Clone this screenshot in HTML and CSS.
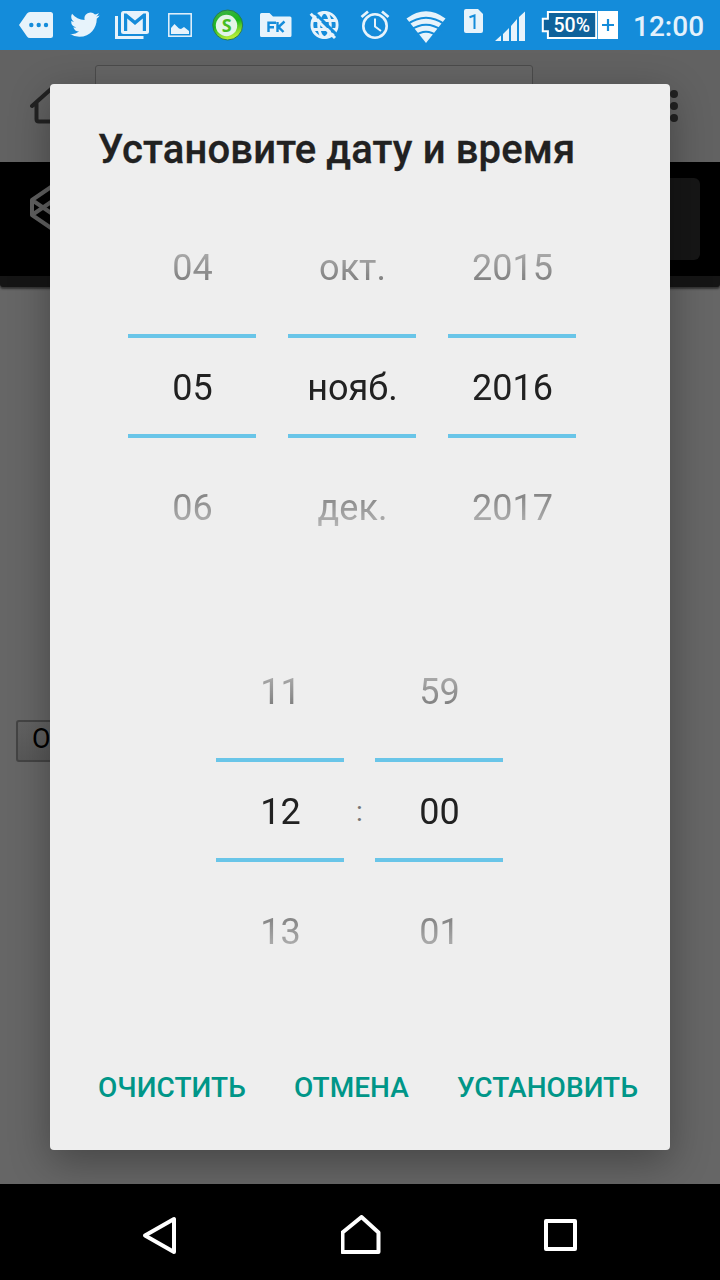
FILE: index.html
```html
<!DOCTYPE html>
<html lang="ru">
<head>
<meta charset="utf-8">
<title>Установите дату и время</title>
<link rel="stylesheet" href="styles.css">
</head>
<body>
<header class="status-bar">
  <svg width="60" height="50" viewBox="0 0 60 50"><path class="ink" d="M19 25L27 13.500Q28 12 30 12H50.500Q53 12 53 14.500V35.500Q53 38 50.500 38H30Q28 38 27 36.500Z"/><g class="hole"><circle cx="31.300" cy="25" r="2.200"/><circle cx="38.700" cy="25" r="2.200"/><circle cx="46" cy="25" r="2.200"/></g></svg>
  <svg width="47" height="50" viewBox="60 0 47 50"><path class="ink" transform="translate(70 9.800) scale(1.240)" d="M23.950 4.570a10 10 0 0 1-2.820.770 4.960 4.960 0 0 0 2.160-2.720c-.950.550-2 .950-3.130 1.180a4.920 4.920 0 0 0-8.380 4.480C7.690 8.090 4.070 6.130 1.640 3.160a4.920 4.920 0 0 0 1.520 6.570 4.900 4.900 0 0 1-2.230-.610v.060a4.920 4.920 0 0 0 3.950 4.830 5 5 0 0 1-2.210.080 4.940 4.940 0 0 0 4.600 3.420A9.870 9.870 0 0 1 0 19.540a13.990 13.990 0 0 0 7.550 2.210c9.050 0 14-7.500 14-13.980 0-.210 0-.420-.020-.630a9.940 9.940 0 0 0 2.420-2.570z"/></svg>
  <svg width="51" height="50" viewBox="107 0 51 50"><path class="line" d="M116.500 16V37.500H143.500" stroke-width="3"/><rect class="ink" x="121" y="11" width="28" height="23" rx="2.500"/><path class="hole" d="M124 13.500H126.500L135 20.500 143.500 13.500H146V31H142.800V18.500L135 25 127.200 18.500V31H124Z"/></svg>
  <svg width="44" height="50" viewBox="158 0 44 50"><rect class="line" x="168.800" y="13.800" width="22.400" height="22.400" stroke-width="1.500"/><path class="ink" d="M171 34V28L174.500 24 179 28.500 181 29 184 27 189 31V34Z"/></svg>
  <svg width="49" height="50" viewBox="202 0 49 50">
    <defs><linearGradient id="coin" x2=".3" y2="1"><stop offset="0" stop-color="#45b44b"/><stop offset=".55" stop-color="#19b51e"/><stop offset="1" stop-color="#b4ed36"/></linearGradient></defs>
    <circle cx="227.700" cy="25" r="15" fill="url(#coin)" stroke="#267a55"/><circle cx="226.500" cy="25.500" r="10.700" fill="#e3f4e9"/><text class="coin-sign" x="226.700" y="32" text-anchor="middle">S</text>
  </svg>
  <svg width="50" height="50" viewBox="251 0 50 50"><path class="ink" d="M260 14.500Q260 13 261.500 13H269.500L273 16.500H290Q291.500 16.500 291.500 18V35.500Q291.500 37 290 37H261.500Q260 37 260 35.500Z"/><path class="cut" d="M268.500 32V22.700H276M268.500 27.200H274M277.500 22V32M284.500 21.500L278.500 27 283.500 32" stroke-width="2.400"/></svg>
  <svg width="49" height="50" viewBox="301 0 49 50"><g class="line" stroke-width="2.900"><circle cx="324.500" cy="25" r="12.600"/><ellipse cx="324.500" cy="25" rx="5.800" ry="12.600"/><path d="M312.500 20.500H336.500M312.500 29.500H336.500"/></g><path class="cut" d="M313.500 11.500L338 36" stroke-width="3"/><path class="line" d="M310.700 13.700L335 38" stroke-width="3"/></svg>
  <svg width="47" height="50" viewBox="350 0 47 50"><circle class="line" cx="375" cy="26" r="11.700" stroke-width="2.600"/><path class="line" d="M375 18.500V26.500L381 31" stroke-width="2"/><path class="line" d="M361.500 17L368 11.500M388.500 17L382 11.500" stroke-width="2.800"/></svg>
  <svg width="58" height="50" viewBox="397 0 58 50"><path class="ink" d="M406.500 18.500Q426 4 445.500 18.500L426 43Z"/><path class="cut" d="M407 24.500Q426 11 445 24.500M410 30.500Q426 19 442 30.500M414 36.500Q426 27 438 36.500" stroke-width="1.900"/></svg>
  <svg width="35" height="50" viewBox="455 0 35 50"><path class="ink" d="M466 9H478L483 14V31Q483 33 481 33H466Q464 33 464 31V11Q464 9 466 9Z"/><path class="cut" d="M469.500 17.200L474.500 15.500V29" stroke-width="2"/></svg>
  <svg width="43" height="50" viewBox="490 0 43 50"><path class="ink" d="M495 41L501 35.500V41ZM503 34L509 28V41H503ZM511 26L517 19V41H511ZM519 17L525 11.500V41H519Z"/></svg>
  <svg width="93" height="50" viewBox="533 0 93 50"><path class="battery" d="M547.900 12H596.200V38H547.900V31.200H542.800V18.800H547.900Z"/><rect x="598" y="11" width="20" height="28" fill="#fff"/><path class="cut" d="M602 25H614M608 19V31" stroke-width="2.200"/><text class="percent" x="553.500" y="32" textLength="36.500" lengthAdjust="spacingAndGlyphs">50%</text></svg>
  <time class="clock">12:00</time>
</header>
<main class="page">
  <div class="toolbar">
    <svg class="home" width="50" height="46" viewBox="0 0 50 46"><path d="M2 23L20 7 38 23M6.500 20V36Q6.500 38.500 9 38.500H31Q33.500 38.500 33.500 36V20"/></svg>
    <div class="address"></div>
    <svg class="menu" width="8" height="32" viewBox="0 0 8 32"><circle cx="4" cy="4" r="4"/><circle cx="4" cy="16" r="4"/><circle cx="4" cy="28" r="4"/></svg>
  </div>
  <div class="site-header">
    <svg width="48" height="50" viewBox="0 0 48 50"><path d="M2 18L24 3 46 18V33L24 48 2 33ZM2 18L24 33 46 18M2 33L24 18 46 33M24 3V18M24 33V48"/></svg>
    <div class="site-button"></div>
  </div>
  <div class="site-strip"></div>
  <button class="page-button">Отправить</button>

  <section class="dialog">
    <h1>Установите дату и время</h1>
    <div class="pickers date">
      <div class="picker"><div class="values"><span>04</span><span>05</span><span>06</span></div></div>
      <div class="picker"><div class="values"><span>окт.</span><span>нояб.</span><span>дек.</span></div></div>
      <div class="picker"><div class="values"><span>2015</span><span>2016</span><span>2017</span></div></div>
    </div>
    <div class="pickers time">
      <div class="picker"><div class="values"><span>11</span><span>12</span><span>13</span></div></div>
      <span class="colon">:</span>
      <div class="picker"><div class="values"><span>59</span><span>00</span><span>01</span></div></div>
    </div>
    <div class="actions"><a>ОЧИСТИТЬ</a><a>ОТМЕНА</a><a>УСТАНОВИТЬ</a></div>
  </section>
</main>
<nav class="nav-bar">
  <svg width="36" height="40" viewBox="0 0 36 40"><path d="M3 20.500L32 4V37Z"/></svg>
  <svg width="40" height="40" viewBox="0 0 40 40"><path d="M1 37V17.500L20 2 37 17.500V37Z" transform="translate(.500 0)"/></svg>
  <svg width="34" height="40" viewBox="0 0 34 40"><path d="M2 6H31V34H2Z"/></svg>
</nav>
</body>
</html>
```

FILE: styles.css
```css
* { box-sizing: border-box; }

body {
  margin: 0;
  width: 720px;
  height: 1280px;
  display: flex;
  flex-direction: column;
  overflow: hidden;
  font-family: Roboto, "Noto Sans", sans-serif;
}

svg { display: block; flex: none; }

.status-bar { display: flex; height: 50px; background: #148cda; }
.ink { fill: #e7f3fb; }
.line { fill: none; stroke: #e7f3fb; }
.hole { fill: #148cda; }
.cut { fill: none; stroke: #148cda; }
.coin-sign { font: 700 18px "Open Sans", sans-serif; fill: #47bd22; }
.battery { fill: #0f629b; stroke: #fff; stroke-width: 2; }
.percent { font: 500 20px Roboto, sans-serif; fill: #fff; }
.clock {
  padding-left: 7px;
  font-size: 28px;
  line-height: 53px;
  font-weight: 500;
  color: #e3f1fb;
}

.page {
  position: relative;
  height: 1134px;
  overflow: hidden;
  background: #666;
}
.toolbar {
  display: flex;
  height: 112px;
  background: #626262;
}
.home { margin: 33px 0 0 30px; fill: none; stroke: #222; stroke-width: 4; stroke-linecap: round; }
.address {
  width: 438px;
  height: 76px;
  margin: 15px 0 0 15px;
  border: 1px solid #4b4b4b;
  border-radius: 3px;
  background: #656565;
}
.menu { margin: 40px 0 0 137px; fill: #222; }
.site-header {
  display: flex;
  justify-content: space-between;
  height: 114px;
  padding: 16px 20px 0 30px;
  background: #000;
}
.site-header svg { margin-top: 4px; fill: none; stroke: #606060; stroke-width: 4; stroke-linejoin: round; }
.site-button { width: 92px; height: 82px; border-radius: 6px; background: #161616; }
.site-strip {
  height: 11px;
  background: #151515;
  border-radius: 0 0 3px 3px;
  box-shadow: 0 2px 2px #333;
}
.page-button {
  display: block;
  width: 160px;
  height: 42px;
  margin: 433px 0 0 16px;
  padding: 0 14px 4px;
  border: 2px solid #444;
  border-radius: 3px;
  background: linear-gradient(#626262, #585858);
  font: 27px Roboto, sans-serif;
  text-align: left;
  color: #000;
}

.dialog {
  position: absolute;
  left: 50px;
  top: 34px;
  width: 620px;
  height: 1066px;
  padding: 36px 0 0;
  border-radius: 4px;
  background: #eee;
  box-shadow: 0 12px 40px rgba(0, 0, 0, .32);
  color: #212121;
}
h1 {
  margin: 0 0 0 48px;
  font-size: 40px;
  line-height: 60px;
  font-weight: 500;
  letter-spacing: .14px;
  white-space: nowrap;
  -webkit-text-stroke: .3px #212121;
}
.pickers { display: flex; height: 360px; }
.date { margin: 26px 0 0 78px; gap: 32px; }
.time { margin: 64px 0 0 166px; }
.picker {
  width: 128px;
  background:
    linear-gradient(#69c5e8, #69c5e8) 0 128px / 100% 4px no-repeat,
    linear-gradient(#69c5e8, #69c5e8) 0 228px / 100% 4px no-repeat;
}
.values {
  display: flex;
  flex-direction: column;
  height: 360px;
  padding: 2px 0 0 1px;
  font-size: 36px;
  line-height: 120px;
  text-align: center;
  -webkit-mask-image: linear-gradient(transparent, #000 140px, #000 220px, transparent);
  mask-image: linear-gradient(transparent, #000 140px, #000 220px, transparent);
}
.values span { height: 120px; }
.colon { width: 31px; font-size: 28px; line-height: 364px; text-align: center; color: #757575; }
.actions {
  display: flex;
  gap: 48px;
  margin: 78px 0 0 48px;
  font-size: 28px;
  line-height: 40px;
  font-weight: 500;
  letter-spacing: .05px;
  white-space: nowrap;
  color: #009688;
}

.nav-bar {
  display: flex;
  align-items: flex-start;
  height: 96px;
  padding: 31px 0 0 142px;
  background: #000;
}
.nav-bar svg { fill: none; stroke: #fff; stroke-width: 4; stroke-linejoin: round; }
.nav-bar svg:nth-child(2) { margin: 0 163px; }
```
